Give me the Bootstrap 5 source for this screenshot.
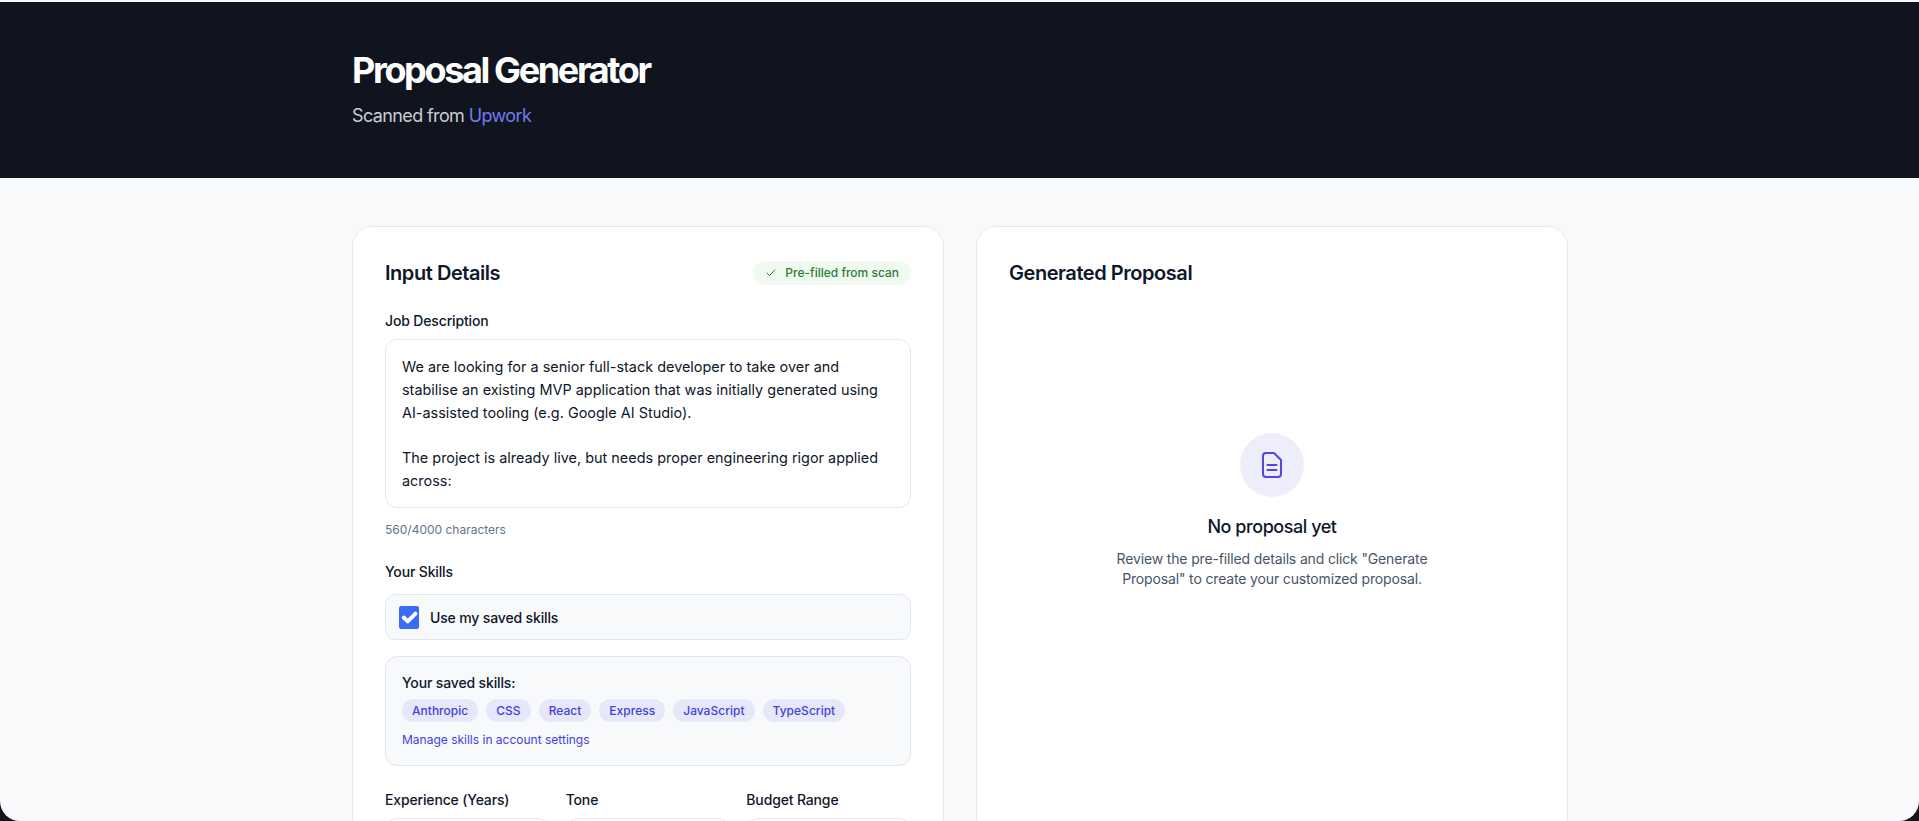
<!DOCTYPE html>
<html lang="en">
<head>
  <meta charset="UTF-8">
  <title>Proposal Generator</title>
  <link href="https://cdn.jsdelivr.net/npm/bootstrap@5.3.2/dist/css/bootstrap.min.css" rel="stylesheet">
  <style>
    html, body {
      height: 100%;
      overflow: hidden;
      background: #14161c;
    }
    body {
      font-family: Inter, "Liberation Sans", sans-serif;
      color: #0f172a;
    }
    .app-frame {
      height: 821px;
      overflow: hidden;
      background: #f8f9fb;
      border-radius: 0 0 20px 20px;
    }
    .page-head {
      margin-top: 2px;
      height: 176px;
      background: #0f141e;
    }
    .page-wrap {
      width: 1216px;
      margin-left: 352px;
    }
    .page-head .page-wrap {
      padding-top: 48px;
    }
    .page-title {
      font-size: 36px;
      line-height: 40px;
      font-weight: 700;
      letter-spacing: -2.36px;
      color: #fff;
      margin: 0 0 12px;
    }
    .page-sub {
      font-size: 18px;
      line-height: 28px;
      letter-spacing: -0.62px;
      color: #c8cdd6;
      margin: 0;
    }
    .page-sub span {
      color: #7479f0;
    }
    .page-main {
      padding-top: 48px;
    }
    .panel {
      width: 592px;
      height: 800px;
      padding: 32px;
      background: #fff;
      border: 1px solid #e2e8f0;
      border-radius: 20px;
    }
    .panel-title {
      font-size: 20px;
      line-height: 28px;
      font-weight: 600;
      letter-spacing: -0.45px;
      margin: 0;
    }
    .scan-pill {
      height: 24px;
      padding: 0 12px;
      font-size: 12px;
      font-weight: 500;
      color: #2e7d32;
      background: #f0faf1;
      border-radius: 12px;
    }
    .field-label {
      display: block;
      font-size: 14px;
      line-height: 20px;
      font-weight: 500;
      letter-spacing: -0.15px;
      margin: 0 0 8px;
    }
    .skills-label {
      margin-bottom: 12px;
    }
    .job-text {
      height: 169px;
      padding: 16px;
      font-size: 14.45px;
      line-height: 22.75px;
      white-space: pre-wrap;
      border: 1px solid #e2e8f0;
      border-radius: 12px;
      overflow: hidden;
    }
    .char-count {
      margin: 14px 0 24px;
      font-size: 12px;
      line-height: 16px;
      color: #64748b;
    }
    .skill-toggle {
      height: 46px;
      padding: 0 13px;
      background: #f8f9fb;
      border: 1px solid #e2e8f0;
      border-radius: 10px;
      font-size: 14px;
      font-weight: 500;
      letter-spacing: -0.15px;
    }
    .skill-toggle .form-check-input {
      width: 20px;
      height: 23px;
      margin: 0 11px 0 0;
      background-color: #3b6cf6;
      background-size: 26px;
      border-color: #3b6cf6;
      border-radius: 2px;
    }
    .saved-box {
      height: 110px;
      padding: 16px;
      background: #f8f9fb;
      border: 1px solid #e2e8f0;
      border-radius: 12px;
    }
    .saved-title {
      font-size: 14px;
      line-height: 20px;
      font-weight: 500;
      letter-spacing: -0.15px;
      margin-bottom: 6px;
    }
    .skill-chip {
      height: 23px;
      padding: 0 10px;
      font-size: 12px;
      line-height: 23px;
      font-weight: 500;
      letter-spacing: 0.02px;
      color: #4540dc;
      background: #e6e8f9;
      border-radius: 12px;
    }
    .manage-link {
      display: block;
      margin-top: 10px;
      font-size: 12px;
      line-height: 16px;
      color: #4540dc;
      text-decoration: none;
    }
    .fake-input {
      height: 42px;
      border: 1px solid #e2e8f0;
      border-radius: 12px;
      background: #fff;
    }
    .empty-state {
      margin-top: 146px;
      text-align: center;
    }
    .empty-icon {
      width: 64px;
      height: 64px;
      margin: 0 auto 16px;
      background: #eeedfc;
      border-radius: 50%;
    }
    .empty-title {
      font-size: 18px;
      line-height: 28px;
      font-weight: 500;
      letter-spacing: -0.45px;
      margin: 0 0 8px;
    }
    .empty-text {
      width: 320px;
      margin: 0 auto;
      font-size: 14px;
      line-height: 20px;
      letter-spacing: -0.15px;
      color: #475569;
    }
  </style>
</head>
<body>
  <div class="app-frame">
    <!-- Header -->
    <header class="page-head">
      <div class="page-wrap">
        <h1 class="page-title">Proposal Generator</h1>
        <p class="page-sub">Scanned from <span>Upwork</span></p>
      </div>
    </header>

    <main class="page-main">
      <div class="page-wrap d-flex gap-4 align-items-start justify-content-between">
        <!-- Input -->
        <section class="panel flex-shrink-0">
          <div class="d-flex justify-content-between align-items-center mb-4">
            <h2 class="panel-title">Input Details</h2>
            <span class="scan-pill d-inline-flex align-items-center gap-2">
              <svg width="12" height="12" viewBox="0 0 24 24" fill="none" stroke="currentColor" stroke-width="2" stroke-linecap="round" stroke-linejoin="round"><path d="M20 6 9 17l-5-5"/></svg>
              Pre-filled from scan
            </span>
          </div>

          <label class="field-label">Job Description</label>
          <div class="job-text">We are looking for a senior full-stack developer to take over and stabilise an existing MVP application that was initially generated using AI-assisted tooling (e.g. Google AI Studio).

The project is already live, but needs proper engineering rigor applied across:</div>
          <div class="char-count">560/4000 characters</div>

          <label class="field-label skills-label">Your Skills</label>
          <label class="skill-toggle d-flex align-items-center mb-3">
            <input class="form-check-input" type="checkbox" checked>
            Use my saved skills
          </label>
          <div class="saved-box mb-4">
            <div class="saved-title">Your saved skills:</div>
            <div class="d-flex gap-2">
              <span class="skill-chip">Anthropic</span>
              <span class="skill-chip">CSS</span>
              <span class="skill-chip">React</span>
              <span class="skill-chip">Express</span>
              <span class="skill-chip">JavaScript</span>
              <span class="skill-chip">TypeScript</span>
            </div>
            <a class="manage-link" href="#">Manage skills in account settings</a>
          </div>

          <div class="row g-3">
            <div class="col-4">
              <label class="field-label">Experience (Years)</label>
              <div class="fake-input"></div>
            </div>
            <div class="col-4">
              <label class="field-label">Tone</label>
              <div class="fake-input"></div>
            </div>
            <div class="col-4">
              <label class="field-label">Budget Range</label>
              <div class="fake-input"></div>
            </div>
          </div>
        </section>

        <!-- Output -->
        <section class="panel flex-shrink-0">
          <h2 class="panel-title">Generated Proposal</h2>
          <div class="empty-state">
            <div class="empty-icon d-flex align-items-center justify-content-center">
              <svg width="24" height="28" viewBox="0 0 24 28" fill="none" stroke="#4f46e5" stroke-width="2" stroke-linecap="round" stroke-linejoin="round"><path d="M6 2h8l7 7v14a3 3 0 0 1-3 3H6a3 3 0 0 1-3-3V5a3 3 0 0 1 3-3z"/><path d="M7.5 14h9M7.5 19h9"/></svg>
            </div>
            <h3 class="empty-title">No proposal yet</h3>
            <p class="empty-text">Review the pre-filled details and click "Generate Proposal" to create your customized proposal.</p>
          </div>
        </section>
      </div>
    </main>
  </div>
  <script src="https://cdn.jsdelivr.net/npm/bootstrap@5.3.2/dist/js/bootstrap.bundle.min.js"></script>
</body>
</html>
